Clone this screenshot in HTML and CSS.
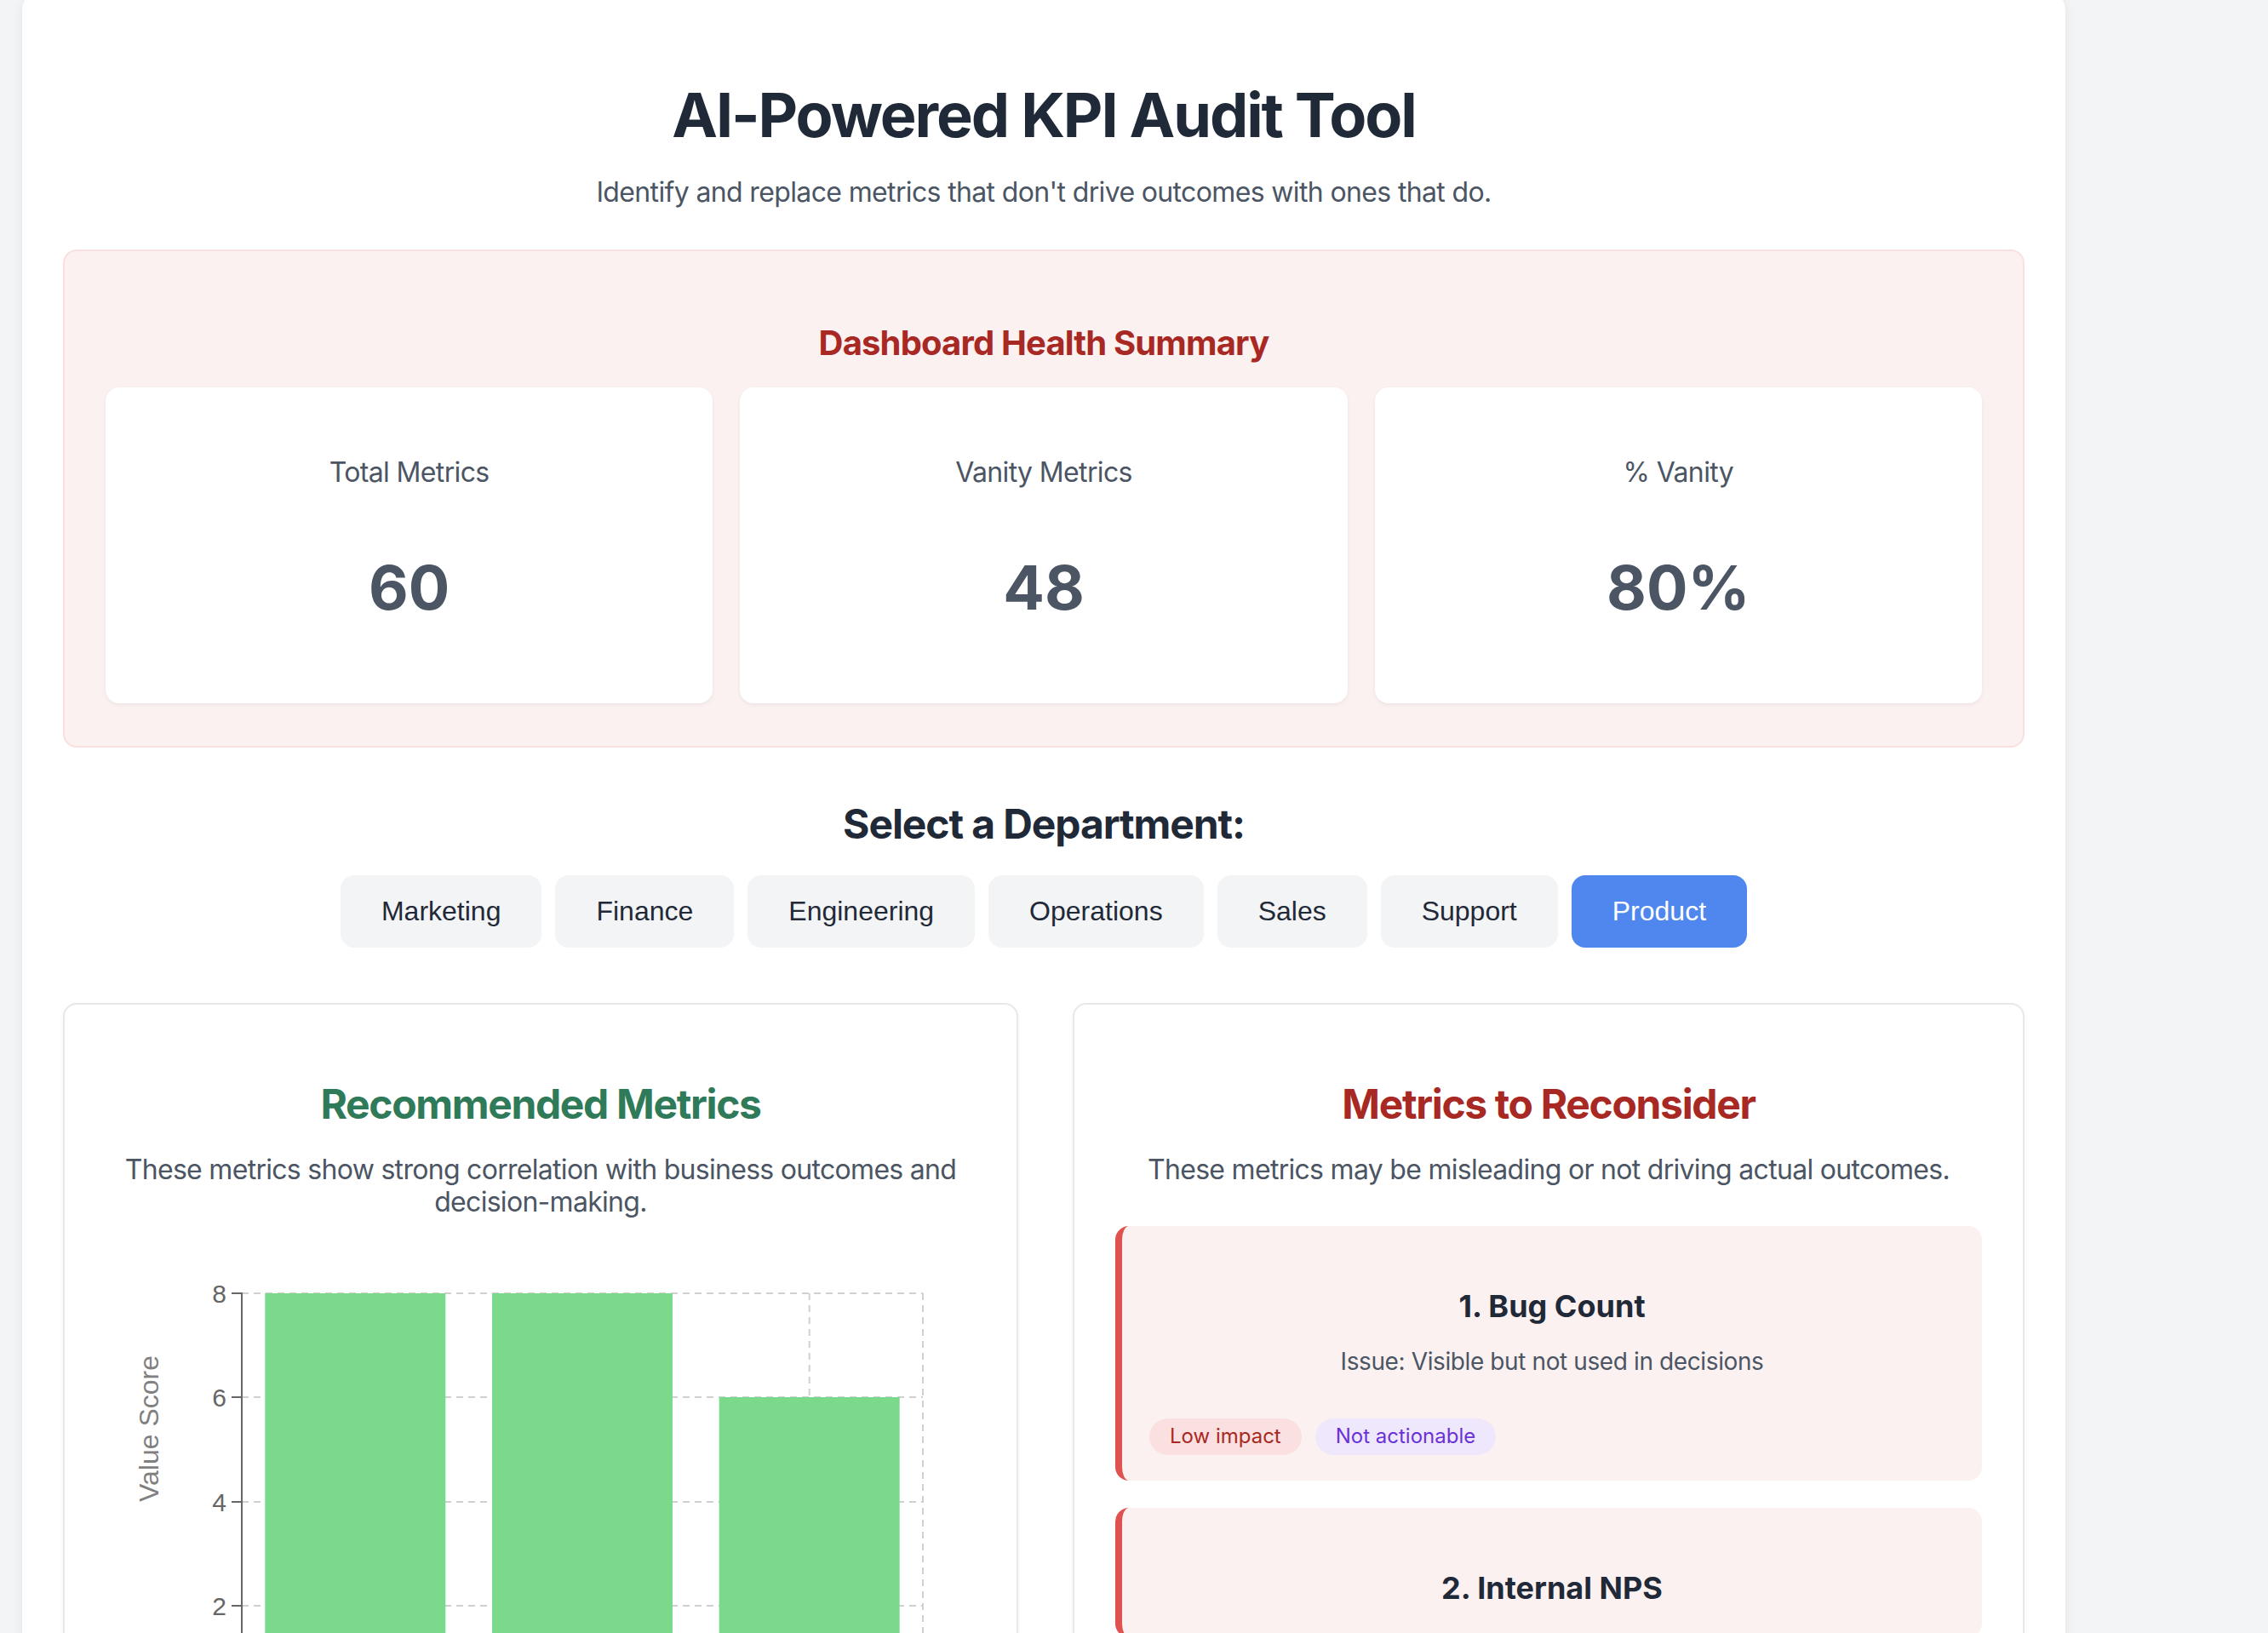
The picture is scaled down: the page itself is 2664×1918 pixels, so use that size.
FILE: index.html
```html
<!DOCTYPE html>
<html lang="en">
<head>
<meta charset="utf-8">
<title>AI-Powered KPI Audit Tool</title>
<link rel="stylesheet" href="styles.css">
</head>
<body>
<main class="container">
  <header class="header">
    <h1 class="title">AI-Powered KPI Audit Tool</h1>
    <p class="subtitle">Identify and replace metrics that don't drive outcomes with ones that do.</p>
  </header>

  <section class="summary">
    <h2 class="summary-title">Dashboard Health Summary</h2>
    <div class="stats">
      <div class="stat">
        <p class="stat-label">Total Metrics</p>
        <p class="stat-value">60</p>
      </div>
      <div class="stat">
        <p class="stat-label">Vanity Metrics</p>
        <p class="stat-value">48</p>
      </div>
      <div class="stat">
        <p class="stat-label">% Vanity</p>
        <p class="stat-value">80%</p>
      </div>
    </div>
  </section>

  <section class="dept">
    <h2 class="dept-title">Select a Department:</h2>
    <div class="dept-buttons">
      <button class="dept-btn">Marketing</button>
      <button class="dept-btn">Finance</button>
      <button class="dept-btn">Engineering</button>
      <button class="dept-btn">Operations</button>
      <button class="dept-btn">Sales</button>
      <button class="dept-btn">Support</button>
      <button class="dept-btn dept-btn-active">Product</button>
    </div>
  </section>

  <div class="panels">
    <section class="panel">
      <h2 class="panel-title panel-title-good">Recommended Metrics</h2>
      <p class="panel-desc">These metrics show strong correlation with business outcomes and decision-making.</p>
      <div class="chart">
        <svg class="chart-svg" width="1022" height="438" viewBox="0 0 1022 438">
          <g stroke="#d0d0d0" stroke-width="2" stroke-dasharray="8 6" fill="none">
            <line x1="160" y1="39" x2="960" y2="39"/>
            <line x1="160" y1="161" x2="960" y2="161"/>
            <line x1="160" y1="284" x2="960" y2="284"/>
            <line x1="160" y1="406" x2="960" y2="406"/>
            <line x1="826.7" y1="39" x2="826.7" y2="438"/>
            <line x1="960" y1="39" x2="960" y2="438"/>
          </g>
          <g fill="#7ad98a">
            <rect x="187.3" y="39" width="212" height="400"/>
            <rect x="454" y="39" width="212" height="400"/>
            <rect x="720.7" y="161" width="212" height="278"/>
          </g>
          <g stroke="#666666" stroke-width="2">
            <line x1="160" y1="38" x2="160" y2="438"/>
            <line x1="148" y1="39" x2="160" y2="39"/>
            <line x1="148" y1="161" x2="160" y2="161"/>
            <line x1="148" y1="284" x2="160" y2="284"/>
            <line x1="148" y1="406" x2="160" y2="406"/>
          </g>
          <g class="chart-ticks" text-anchor="end">
            <text x="142" y="50">8</text>
            <text x="142" y="172">6</text>
            <text x="142" y="295">4</text>
            <text x="142" y="417">2</text>
          </g>
          <text class="chart-axis-title" transform="translate(62 198) rotate(-90)" text-anchor="middle">Value Score</text>
        </svg>
      </div>
    </section>

    <section class="panel">
      <h2 class="panel-title panel-title-bad">Metrics to Reconsider</h2>
      <p class="panel-desc">These metrics may be misleading or not driving actual outcomes.</p>
      <div class="issues">
        <article class="issue">
          <h3 class="issue-title">1. Bug Count</h3>
          <p class="issue-text">Issue: Visible but not used in decisions</p>
          <div class="tags">
            <span class="tag tag-red">Low impact</span>
            <span class="tag tag-purple">Not actionable</span>
          </div>
        </article>
        <article class="issue">
          <h3 class="issue-title">2. Internal NPS</h3>
        </article>
      </div>
    </section>
  </div>
</main>
</body>
</html>
```

FILE: styles.css
```css
* {
  box-sizing: border-box;
}

html, body {
  margin: 0;
  padding: 0;
}

body {
  background: #f3f4f6;
  font-family: "Inter", "Noto Sans", sans-serif;
  color: #1f2937;
  letter-spacing: -0.022em;
  overflow: hidden;
}

.container {
  width: 2400px;
  margin: -12px 0 0 26px;
  padding: 48px;
  background: #ffffff;
  border-radius: 24px;
  box-shadow: 0 4px 14px rgba(0, 0, 0, 0.07);
}

/* Header */
.header {
  margin-top: 59px;
  margin-bottom: 43px;
  text-align: center;
}

.title {
  margin: 0 0 27px;
  font-size: 72px;
  line-height: 80px;
  font-weight: 700;
  letter-spacing: -0.029em;
  color: #1f2937;
}

.subtitle {
  margin: 0;
  font-size: 32px;
  line-height: 48px;
  letter-spacing: -0.02em;
  color: #4b5563;
}

/* Summary */
.summary {
  background: #fcf1f1;
  border: 2px solid #fadfdf;
  border-radius: 16px;
  padding: 48px 48px 50px;
  margin-bottom: 58px;
  text-align: center;
}

.summary-title {
  margin: 32px 0 24px;
  font-size: 40px;
  line-height: 56px;
  font-weight: 700;
  letter-spacing: -0.021em;
  color: #a82923;
}

.stats {
  display: grid;
  grid-template-columns: repeat(3, 1fr);
  gap: 32px;
}

.stat {
  background: #ffffff;
  border-radius: 16px;
  padding: 76px 48px 96px;
  box-shadow: 0 2px 5px rgba(0, 0, 0, 0.06);
}

.stat-label {
  margin: 0 0 71px;
  font-size: 32px;
  line-height: 48px;
  letter-spacing: -0.02em;
  color: #4b5563;
}

.stat-value {
  margin: 0;
  font-size: 72px;
  line-height: 80px;
  font-weight: 700;
  letter-spacing: 0;
  color: #4b5563;
}

/* Department selector */
.dept {
  text-align: center;
}

.dept-title {
  margin: 0 0 28px;
  font-size: 48px;
  line-height: 64px;
  font-weight: 700;
  letter-spacing: -0.023em;
  color: #1f2937;
}

.dept-buttons {
  display: flex;
  justify-content: center;
  flex-wrap: wrap;
  gap: 16px;
}

.dept-btn {
  border: none;
  border-radius: 16px;
  padding: 24px 48px;
  background: #f3f4f6;
  color: #1f2937;
  font-family: "Liberation Sans", Arial, sans-serif;
  font-size: 32px;
  line-height: 37px;
  letter-spacing: 0;
  cursor: pointer;
}

.dept-btn-active {
  background: #4f87ef;
  color: #ffffff;
}

/* Panels */
.panels {
  margin-top: 65px;
  display: grid;
  grid-template-columns: 1fr 1fr;
  gap: 64px;
}

.panel {
  background: #ffffff;
  border: 2px solid #e8e8ea;
  border-radius: 16px;
  padding: 48px;
  box-shadow: 0 2px 6px rgba(0, 0, 0, 0.04);
  text-align: center;
}

.panel-title {
  margin: 37px 0 0;
  font-size: 48px;
  line-height: 64px;
  font-weight: 700;
  letter-spacing: -0.028em;
}

.panel-title-good {
  color: #2f7a58;
}

.panel-title-bad {
  color: #a82923;
}

.panel-desc {
  margin: 26px 0 0;
  font-size: 32px;
  line-height: 38px;
  letter-spacing: -0.022em;
  color: #4b5563;
}

/* Chart */
.chart {
  margin-top: 49px;
  text-align: left;
}

.chart-svg {
  display: block;
}

.chart-ticks {
  font-family: "Liberation Sans", Arial, sans-serif;
  font-size: 30px;
  letter-spacing: 0;
  fill: #666666;
}

.chart-axis-title {
  font-family: "Liberation Sans", Arial, sans-serif;
  font-size: 32px;
  letter-spacing: 0;
  fill: #808080;
}

/* Issues */
.issues {
  margin-top: 47px;
  display: flex;
  flex-direction: column;
  gap: 32px;
}

.issue {
  background: #fcf1f1;
  border-left: 8px solid #e05250;
  border-radius: 16px;
  padding: 32px 32px 30px;
}

.issue-title {
  margin: 34px 0 0;
  font-size: 36px;
  line-height: 56px;
  font-weight: 700;
  letter-spacing: 0;
  color: #1f2937;
}

.issue-text {
  margin: 17px 0 0;
  font-size: 28px;
  line-height: 40px;
  letter-spacing: -0.014em;
  color: #4b5563;
}

.tags {
  margin-top: 47px;
  display: flex;
  flex-wrap: wrap;
  gap: 16px;
}

.tag {
  display: inline-block;
  padding: 5px 24px 6px;
  border-radius: 999px;
  font-size: 24px;
  line-height: 32px;
  letter-spacing: 0;
}

.tag-red {
  background: #fae0e0;
  color: #a82923;
}

.tag-purple {
  background: #efe8fd;
  color: #6a32d6;
}
```
